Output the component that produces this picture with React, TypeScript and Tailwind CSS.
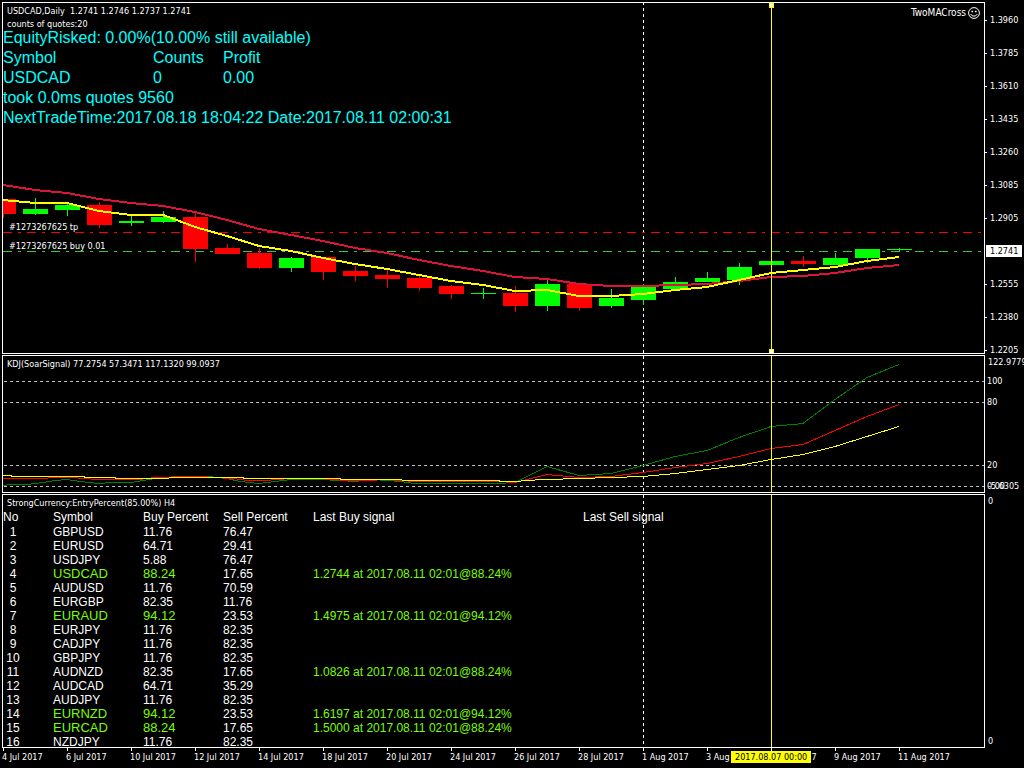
import React from "react";

type Candle = { up: boolean; top: number; bottom: number; high: number; low: number };

const STEP = 32;

const c = (up: boolean, top: number, bottom: number, high: number, low: number): Candle => ({
  up,
  top,
  bottom,
  high,
  low,
});

const candles: Candle[] = [
  c(false, 199, 214, 199, 218),
  c(true, 209, 214, 198, 215),
  c(true, 205, 210, 203, 216),
  c(false, 205, 225, 202, 228),
  c(true, 221, 223, 215, 226),
  c(true, 217, 222, 211, 223),
  c(false, 217, 249, 212, 262),
  c(false, 248, 254, 244, 254),
  c(false, 253, 268, 248, 269),
  c(true, 258, 268, 257, 272),
  c(false, 257, 272, 257, 280),
  c(false, 271, 276, 266, 281),
  c(false, 275, 279, 270, 288),
  c(false, 278, 288, 275, 291),
  c(false, 286, 294, 285, 299),
  c(true, 293, 294, 288, 299),
  c(false, 293, 306, 286, 312),
  c(true, 284, 306, 280, 311),
  c(false, 284, 308, 284, 311),
  c(true, 298, 306, 289, 308),
  c(true, 287, 300, 284, 305),
  c(true, 282, 289, 277, 289),
  c(true, 278, 282, 272, 282),
  c(true, 267, 280, 263, 285),
  c(true, 261, 265, 261, 265),
  c(false, 261, 264, 256, 267),
  c(true, 258, 265, 253, 265),
  c(true, 249, 258, 249, 263),
  c(true, 249, 250, 248, 251),
];

const slowMA = [185, 190, 193, 199, 203, 206, 212, 220, 229, 235, 241, 248, 253, 260, 266, 271, 277, 279, 284, 286, 286, 285, 284, 281, 277, 276, 273, 268, 265];
const fastMA = [200, 203, 203, 211, 215, 215, 227, 236, 246, 251, 258, 264, 269, 275, 281, 285, 291, 290, 296, 296, 294, 290, 287, 280, 273, 270, 267, 261, 257];

const lineJ = "3,485 11,484 27,484 35,483 43,482 55,480 67,479 80,481 99,483 112,482 131,482 143,480 155,478 171,477 187,476 208,476 227,478 240,481 259,483 275,481 291,479 320,479 340,480 355,481 371,479 388,480 400,481 415,483 440,483 498,483 515,482 547,466 579,475 611,473 643,465 675,456 707,450 739,437 771,426 803,423 835,399 867,377 899,364";
const lineK = "3,478 45,478 52,477 74,477 82,478 99,479 139,479 155,477 187,476 200,476 215,477 233,478 248,480 265,480 277,479 291,478 320,478 345,480 370,480 385,479 403,480 412,481 467,481 499,481 515,482 547,474 579,477 611,476 643,472 675,467 707,463 739,456 771,448 803,444 835,430 867,416 899,404";
const lineD = "3,475 20,476 84,476 85,477 115,477 116,478 160,478 179,477 208,477 243,477 244,478 340,478 341,479 400,479 404,480 499,480 500,481 519,481 523,480 547,479 579,478 611,477 643,476 675,473 707,469 739,465 771,459 803,454 835,446 867,436 899,426";

const priceLabels = ["1.3960", "1.3785", "1.3610", "1.3435", "1.3260", "1.3085", "1.2905", "1.2741", "1.2555", "1.2380", "1.2205"];

const dates = ["4 Jul 2017", "6 Jul 2017", "10 Jul 2017", "12 Jul 2017", "14 Jul 2017", "18 Jul 2017", "20 Jul 2017", "24 Jul 2017", "26 Jul 2017", "28 Jul 2017", "1 Aug 2017", "3 Aug 2017", "7 Aug 2017", "9 Aug 2017", "11 Aug 2017"];

const ENTRY_PERCENT = 85;

const rows: [string, string, string, string?][] = [
  ["GBPUSD", "11.76", "76.47"],
  ["EURUSD", "64.71", "29.41"],
  ["USDJPY", "5.88", "76.47"],
  ["USDCAD", "88.24", "17.65", "1.2744 at 2017.08.11 02:01@88.24%"],
  ["AUDUSD", "11.76", "70.59"],
  ["EURGBP", "82.35", "11.76"],
  ["EURAUD", "94.12", "23.53", "1.4975 at 2017.08.11 02:01@94.12%"],
  ["EURJPY", "11.76", "82.35"],
  ["CADJPY", "11.76", "82.35"],
  ["GBPJPY", "11.76", "82.35"],
  ["AUDNZD", "82.35", "17.65", "1.0826 at 2017.08.11 02:01@88.24%"],
  ["AUDCAD", "64.71", "35.29"],
  ["AUDJPY", "11.76", "82.35"],
  ["EURNZD", "94.12", "23.53", "1.6197 at 2017.08.11 02:01@94.12%"],
  ["EURCAD", "88.24", "17.65", "1.5000 at 2017.08.11 02:01@88.24%"],
  ["NZDJPY", "11.76", "82.35"],
];

const toPoints = (ys: number[]) => ys.map((y, i) => `${3 + i * STEP},${y}`).join(" ");

/* Window coordinates are kept in the data; each panel shifts them by its own top edge. */
function Plot({ top, children }: { top: number; children?: React.ReactNode }) {
  return (
    <svg className="col-start-1 row-start-1 h-full w-full" shapeRendering="crispEdges" aria-hidden="true">
      <g transform={`translate(-3 ${-top})`}>{children}</g>
    </svg>
  );
}

function PeriodLine({ from, to }: { from: number; to: number }) {
  return <path d={`M643.5 ${from}V${to}`} stroke="#fff" strokeDasharray="3 3" />;
}

function Cursor({ from, to }: { from: number; to: number }) {
  return <path d={`M771.5 ${from}V${to}`} stroke="#ff0" />;
}

function Panel({ className, axis, children }: { className: string; axis: React.ReactNode; children: React.ReactNode }) {
  return (
    <section className={`flex ${className}`}>
      <div className="grid min-w-0 flex-1 grid-cols-1 grid-rows-1 overflow-hidden border border-white">{children}</div>
      <div className="flex w-[39px] shrink-0 flex-col whitespace-nowrap leading-[12px]">{axis}</div>
    </section>
  );
}

function Smiley() {
  return (
    <svg className="h-3 w-3" viewBox="0 0 12 12" fill="none" stroke="#fff" aria-hidden="true">
      <circle cx="6" cy="6" r="5.4" />
      <path d="M3.5 4.5h1.6M7 4.5h1.6" strokeWidth="1.4" />
      <path d="M2.8 7.2C3.8 9.7 8.2 9.7 9.2 7.2" />
    </svg>
  );
}

function PriceAxis() {
  return (
    <div className="mt-3 -mb-0.5 flex flex-1 flex-col justify-between">
      {priceLabels.map((label) =>
        label === "1.2741" ? (
          <div key={label} className="mr-0.5 ml-px bg-white pl-1 text-black">
            {label}
          </div>
        ) : (
          <div key={label} className="flex items-center gap-[3px]">
            <span className="h-px w-0.5 bg-white" />
            {label}
          </div>
        ),
      )}
    </div>
  );
}

export default function App() {
  return (
    <main className="min-h-screen w-full overflow-hidden bg-black pt-0.5 pl-0.5 font-['DejaVu_Sans_Condensed','DejaVu_Sans',sans-serif] text-[9px] text-white">
      <div className="flex flex-col gap-px">
        <Panel className="h-[352px]" axis={<PriceAxis />}>
          <Plot top={3}>
            <PeriodLine from={2} to={353} />
            <path d="M3 232.5H982" stroke="#f00" strokeDasharray="9 6 3 6" />
            <path d="M3 251.5H982" stroke="#32cd32" strokeDasharray="9 6 3 6" />
            {candles.map((k, i) => (
              <g key={i} fill={k.up ? "#0f0" : "#f00"}>
                <rect x={3 + i * STEP} y={k.high} width={1} height={k.low - k.high} />
                <rect x={i * STEP - 9} y={k.top} width={25} height={k.bottom - k.top} />
              </g>
            ))}
            <polyline points={toPoints(slowMA)} fill="none" stroke="#dc143c" strokeWidth={2} />
            <polyline points={toPoints(fastMA)} fill="none" stroke="#ff0" strokeWidth={2} />
            <text x={9} y={230} fill="#fff">#1273267625 tp</text>
            <text x={9} y={249} fill="#fff">#1273267625 buy 0.01</text>
            <Cursor from={3} to={353} />
            <rect x={769.5} y={3.5} width={4} height={4} fill="#fff" stroke="#ff0" />
            <rect x={769.5} y={349.5} width={4} height={4} fill="#fff" stroke="#ff0" />
          </Plot>
          <div className="col-start-1 row-start-1 pt-0.5">
            <header className="flex justify-between pl-1 leading-[13px]">
              <div>
                <h1 className="whitespace-pre">USDCAD,Daily  1.2741 1.2746 1.2737 1.2741</h1>
                <p>counts of quotes:20</p>
              </div>
              <p className="flex items-center gap-0.5 self-start pt-px pr-1 text-[10px]">
                TwoMACross
                <Smiley />
              </p>
            </header>
            <div className="-mt-[3px] font-['Liberation_Sans',sans-serif] text-[16px] leading-5 text-[#00ffff]">
              <p>EquityRisked: 0.00%(10.00% still available)</p>
              <table className="table-fixed border-collapse text-left">
                <thead>
                  <tr>
                    <th className="w-[150px] p-0 font-normal">Symbol</th>
                    <th className="w-[70px] p-0 font-normal">Counts</th>
                    <th className="w-[70px] p-0 font-normal">Profit</th>
                  </tr>
                </thead>
                <tbody>
                  <tr>
                    <td className="p-0">USDCAD</td>
                    <td className="p-0">0</td>
                    <td className="p-0">0.00</td>
                  </tr>
                </tbody>
              </table>
              <p>took 0.0ms quotes 9560</p>
              <p>NextTradeTime:2017.08.18 18:04:22 Date:2017.08.11 02:00:31</p>
            </div>
          </div>
        </Panel>

        <Panel
          className="h-[138px]"
          axis={
            <div className="flex flex-col overflow-hidden pt-px pl-0.5">
              <span className="pl-px">122.9779</span>
              <span className="mt-[7px]">100</span>
              <span className="mt-[9px]">80</span>
              <span className="mt-[51px]">20</span>
              <span className="relative mt-[9px]">
                0.00
                <span className="absolute top-0 left-px">-5.6305</span>
              </span>
            </div>
          }
        >
          <Plot top={356}>
            {[381, 402, 465, 486].map((y) => (
              <path key={y} d={`M4 ${y}.5H984`} stroke="#c0c0c0" strokeDasharray="3 3" />
            ))}
            <PeriodLine from={356} to={492} />
            <g fill="none" transform="translate(0 0.5)">
              <polyline points={lineJ} stroke="#008000" />
              <polyline points={lineK} stroke="#f00" />
              <polyline points={lineD} stroke="#ff0" />
            </g>
            <Cursor from={356} to={492} />
          </Plot>
          <h2 className="col-start-1 row-start-1 pt-0.5 pl-1 leading-[13px]">
            KDJ(SoarSignal) 77.2754 57.3471 117.1320 99.0937
          </h2>
        </Panel>

        <Panel
          className="h-[254px]"
          axis={
            <div className="flex flex-1 flex-col justify-between py-px pl-[3px]">
              <span>0</span>
              <span>0</span>
            </div>
          }
        >
          <Plot top={495}>
            <PeriodLine from={495} to={747} />
            <Cursor from={495} to={747} />
          </Plot>
          <div className="col-start-1 row-start-1 h-[252px]">
            <h2 className="pt-0.5 pl-1 leading-[13px]">StrongCurrency:EntryPercent(85.00%) H4</h2>
            <table className="table-fixed border-collapse text-left font-['Liberation_Sans',sans-serif] text-[12px] leading-[14px]">
              <thead>
                <tr className="h-[15px] align-top">
                  <th className="w-[50px] p-0 align-top font-normal">No</th>
                  <th className="w-[90px] p-0 align-top font-normal">Symbol</th>
                  <th className="w-[80px] p-0 align-top font-normal">Buy Percent</th>
                  <th className="w-[90px] p-0 align-top font-normal">Sell Percent</th>
                  <th className="w-[270px] p-0 align-top font-normal">Last Buy signal</th>
                  <th className="w-[120px] p-0 align-top font-normal">Last Sell signal</th>
                </tr>
              </thead>
              <tbody>
                {rows.map(([symbol, buy, sell, signal], i) => {
                  const cell = Number(buy) > ENTRY_PERCENT ? "p-0 text-[13px] text-[#7cfc00]" : "p-0";
                  return (
                    <tr key={symbol} className="h-[14px]">
                      <td className="p-0">
                        <span className="block w-5 text-center">{i + 1}</span>
                      </td>
                      <td className={cell}>{symbol}</td>
                      <td className={cell}>{buy}</td>
                      <td className="p-0">{sell}</td>
                      <td className="p-0 text-[#7cfc00]">{signal}</td>
                      <td className="p-0" />
                    </tr>
                  );
                })}
              </tbody>
            </table>
          </div>
        </Panel>
      </div>

      <div className="relative flex h-5 leading-[12px] whitespace-nowrap">
        {dates.map((date) => (
          <div key={date} className="w-16 shrink-0">
            <span className="ml-px block h-[3px] w-px bg-white" />
            {date}
          </div>
        ))}
        <span className="absolute top-[3px] left-[729px] bg-[#ffff00] px-1 text-black">2017.08.07 00:00</span>
      </div>
    </main>
  );
}
